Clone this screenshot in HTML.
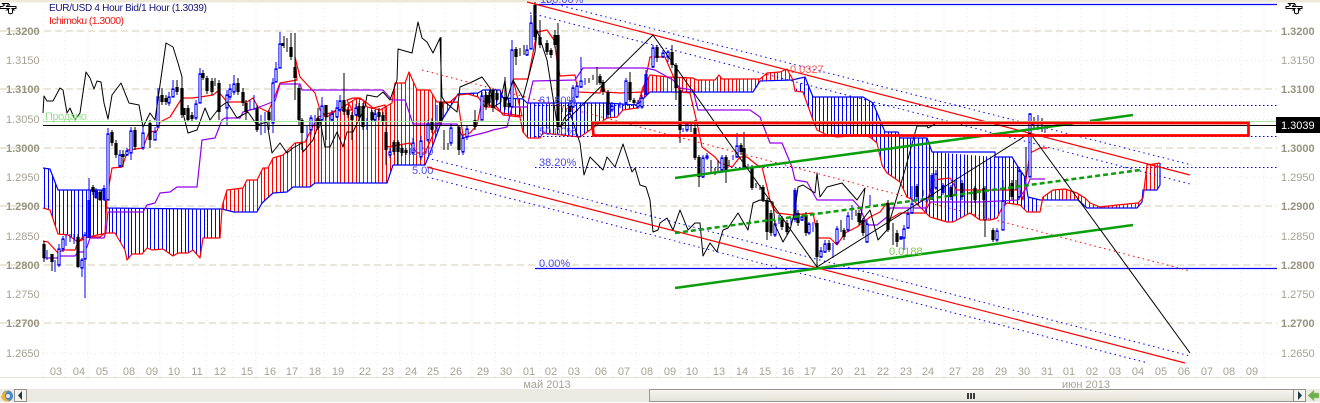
<!DOCTYPE html>
<html><head><meta charset="utf-8"><style>
html,body{margin:0;padding:0;background:#fff;width:1320px;height:403px;overflow:hidden}
svg{display:block}
text{font-family:"Liberation Sans",sans-serif;font-size:11px}
.a text{fill:#a5a394}
.b{font-weight:bold}
.a .b{fill:#96947f}
.d text{fill:#a5a394;text-anchor:middle}
.p{fill:none;stroke-linejoin:round}
</style></head><body>
<svg width="1320" height="403" viewBox="0 0 1320 403" xmlns="http://www.w3.org/2000/svg">
<defs>
<pattern id="hr" width="19" height="10" patternUnits="userSpaceOnUse" x="44"><path d="M0 0h1v10h-1zM4 0h1v10h-1zM8 0h1v10h-1zM11 0h1v10h-1zM15 0h1v10h-1z" fill="#f00" shape-rendering="crispEdges"/></pattern>
<pattern id="hb" width="19" height="10" patternUnits="userSpaceOnUse" x="44"><path d="M0 0h1v10h-1zM4 0h1v10h-1zM8 0h1v10h-1zM11 0h1v10h-1zM15 0h1v10h-1z" fill="#00f" shape-rendering="crispEdges"/></pattern>
<linearGradient id="th" x1="0" y1="0" x2="0" y2="1"><stop offset="0" stop-color="#f6f5ef"/><stop offset="1" stop-color="#e4e3da"/></linearGradient>
<g id="zm" fill="#fff" stroke="#000" stroke-width="1"><path d="M3.500 3.500h5l1 1.500h-2l-1 1.500h9.500v2h-4l2 1.500h-1.500v3l-2 1-2-1v-3h-1.500l2-1.500h-9v-2h2.500l2-1.500-2-1.500z"/></g>
</defs>
<rect width="1320" height="2.500" fill="#ece9d8"/>

<!-- grid -->
<g stroke="#ebe7d8" stroke-width="1" stroke-dasharray="1 3" fill="none">
<path d="M43 4V377M65 4V377M88 4V377M115 4V377M138 4V377M160 4V377M183 4V377M206 4V377M233 4V377M256 4V377M278 4V377M301 4V377M324 4V377M354 4V377M377 4V377M400 4V377M422 4V377M445 4V377M472 4V377M495 4V377M518 4V377M540 4V377M563 4V377M590 4V377M613 4V377M636 4V377M659 4V377M681 4V377M708 4V377M731 4V377M754 4V377M777 4V377M799 4V377M826 4V377M849 4V377M872 4V377M895 4V377M917 4V377M944 4V377M967 4V377M990 4V377M1013 4V377M1036 4V377M1058 4V377M1081 4V377M1104 4V377M1127 4V377M1150 4V377M1173 4V377M1196 4V377M1218 4V377M1241 4V377M1264 4V377"/>
<path d="M43 60.500H1277M43 119.500H1277M43 177.500H1277M43 236.500H1277M43 294.500H1277M43 353.500H1277"/>
</g>
<g stroke="#ebe7d8" stroke-width="2" stroke-dasharray="7 4" fill="none">
<path d="M0 31H1277M0 89H1277M0 148H1277M0 206H1277M0 265H1277M0 323H1277"/>
</g>
<path d="M0 377.500H1320" stroke="#e4e2d6"/>

<!-- cloud -->
<polygon fill="url(#hb)" points="43,168 50,169 58,190 103,190 107,208 200,209 222,209 220,238 203,238 200,258 193,250 188,253 178,253 173,256 163,249 152,250 147,248 142,254 132,254 127,260 125,250 115,233 107,233 88,237 78,242 68,235 58,234 50,210 43,208"/>
<polygon fill="url(#hr)" points="222,209 223,203 227,190 243,188 247,180 257,180 263,168 268,168 273,158 283,155 295,143 305,142 312,128 318,117 330,113 343,107 357,98 363,100 367,107 380,110 392,103 395,83 405,83 409,72 417,90 430,90 437,102 450,102 458,95 458,94 455,99 442,120 430,153 425,165 393,165 387,183 315,183 310,187 293,187 287,192 273,193 262,203 257,212 234,212"/>
<polygon fill="url(#hb)" points="458,94 478,93 483,90 500,90 503,98 523,99 527,103 607,103 637,105 645,97 637,108 623,110 617,117 607,118 580,137 543,133 540,138 528,138 523,132 520,117 503,115 497,107 485,107 478,97 468,94"/>
<polygon fill="url(#hr)" points="637,108 643,87 650,75 668,77 693,78 697,80 715,80 719,75 722,79 760,79 767,73 780,72 787,69 793,80 795,91 792,80 760,81 753,92 650,92 645,97"/>
<polygon fill="url(#hb)" points="795,91 805,77 813,97 863,97 873,103 880,120 885,132 898,132 900,138 927,138 932,152 995,157 1012,157 1020,170 1025,177 1028,197 1040,200 1040,212 1027,212 1020,205 1007,203 1002,208 997,218 990,220 980,220 970,213 953,222 947,222 930,217 913,200 907,197 900,182 887,173 882,165 877,143 870,137 860,135 837,137 827,135 817,130 813,120 803,92"/>
<polygon fill="url(#hr)" points="1043,197 1053,190 1065,189 1077,193 1085,198 1090,203 1100,207 1117,205 1138,203 1143,198 1147,165 1160,163 1160,183 1157,190 1143,190 1142,202 1137,208 1087,208 1078,200 1043,200"/>

<!-- span lines -->
<g class="p" stroke="#00f" stroke-width="1.200">
<polyline points="43,168 50,169 58,190 103,190 107,208 200,209 222,209 234,212 257,212 262,203 273,193 287,192 293,187 310,187 315,183 387,183 393,165 425,165 430,153 442,120 455,99 458,94 478,93 483,90 500,90 503,98 523,99 527,103 607,103 637,105 645,97 650,92 753,92 760,81 792,80 805,77 813,97 863,97 873,103 880,120 885,132 898,132 900,138 927,138 932,152 995,152 995,157 1012,157 1020,170 1025,177 1028,197 1040,200 1078,200 1087,208 1137,208 1142,202 1143,190 1157,190 1160,185 1160,163"/>
</g>
<g class="p" stroke="#f00" stroke-width="1.200">
<polyline points="43,208 50,210 58,234 68,235 78,242 88,237 107,233 115,233 125,250 127,260 132,254 142,254 147,248 152,250 163,249 173,256 178,253 188,253 193,250 200,258 203,238 220,238 222,209 223,203 227,190 243,188 247,180 257,180 263,168 268,168 273,158 283,155 295,143 305,142 312,128 318,117 330,113 343,107 357,98 363,100 367,107 380,110 392,103 395,83 405,83 409,72 417,90 430,90 437,102 450,102 458,95 468,94 478,97 485,107 497,107 503,115 520,117 523,132 528,138 540,138 543,133 580,137 607,118 617,117 623,110 637,108 643,87 650,75 668,77 693,78 697,80 715,80 719,75 722,79 760,79 767,73 780,72 787,69 793,80 795,91 803,92 813,120 817,130 827,135 837,137 860,135 870,137 877,143 882,165 887,173 900,182 907,197 913,200 930,217 947,222 953,222 970,213 980,220 990,220 997,218 1002,208 1007,203 1020,205 1027,212 1040,212 1043,197 1053,190 1065,189 1077,193 1085,198 1090,203 1100,207 1117,205 1138,203 1143,198 1147,165 1160,163"/>
<polyline points="43,241 48,242 58,253 63,250 75,250 78,242 83,237 100,237 105,233 107,197 112,168 122,167 128,150 143,148 149,132 157,131 160,122 170,117 182,98 192,98 200,97 213,95 218,91 227,102 247,102 253,98 258,107 268,112 273,101 280,83 297,80 295,57 300,77 315,93 320,110 327,117 330,115 337,110 352,110 347,100 353,98 360,98 367,103 373,108 385,105 387,147 410,143 417,153 425,153 432,137 440,120 443,103 458,102 463,135 470,133 477,125 482,100 493,107 502,113 522,116 513,79 528,79 537,32 547,30 554,40 557,60 560,76 575,75 578,92 600,93 603,83 605,92 620,93 643,92 650,57 665,57 680,92 690,93 697,123 702,147 715,157 720,163 732,167 740,157 747,157 757,165 762,167 767,187 770,200 773,208 777,213 793,215 813,213 818,238 830,238 837,245 845,233 857,227 870,217 880,212 887,203 888,220 900,213 925,213 927,203 933,180 950,178 957,190 1020,190 1023,200 1030,153 1040,148 1047,148"/>
</g>
<polyline class="p" stroke="#9400f0" stroke-width="1.200" points="43,258 57,258 59,256 75,256 78,252 83,252 87,247 90,238 104,238 106,232 108,212 143,212 147,205 155,203 160,193 170,192 177,187 197,187 202,140 215,138 222,120 225,118 240,118 243,112 257,108 275,101 280,84 300,84 302,90 383,90 392,100 405,100 413,124 457,124 463,138 487,132 493,130 507,127 512,107 527,107 533,81 575,80 583,68 645,68 655,70 673,80 680,88 693,90 698,110 750,110 760,117 763,125 770,143 782,143 792,167 795,180 807,182 817,200 853,200 860,208 867,225 877,225 887,217 890,208 927,208 930,202 980,202 1018,200 1027,187 1030,179 1045,179"/>

<!-- candles -->
<path class="p" stroke="#000" stroke-width="1" d="M44 241V262M52 254V271M78 234V268M93 185V195M100 190V201M112 130V146M116 140V158M123 150V167M135 127V150M150 120V148M162 88V105M166 95V105M177 80V95M182 80V118M188 105V122M192 112V122M203 70V80M207 76V94M212 78V95M215 78V86M219 80V120M238 78V95M243 88V106M246 100V120M257 105V132M269 110V130M284 36V48M287 38V52M291 33V60M295 33V100M299 85V125M302 118V150M318 108V130M326 105V140M344 73V115M348 107V118M352 112V140M359 103V120M363 103V130M372 110V122M379 108V120M383 112V125M386 128V165M394 140V155M398 140V165M402 145V156M406 148V155M432 118V133M441 37V125M444 130V150M448 143V150M459 125V155M475 110V130M486 92V110M489 92V106M493 88V112M497 90V102M505 77V110M509 100V108M516 47V65M520 48V56M524 45V55M535 2V40M540 20V48M547 40V55M551 48V58M555 30V48M558 23V130M562 108V112M566 108V112M570 100V115M589 78V83M593 75V80M597 67V85M600 74V85M603 80V95M608 90V118M630 72V102M634 98V105M657 45V62M672 45V68M676 63V100M680 88V143M691 122V132M695 120V160M699 155V187M711 160V173M715 168V175M718 160V172M726 155V183M729 160V166M741 143V155M744 132V170M752 165V190M756 183V188M760 185V190M763 185V202M767 198V240M771 210V236M782 216V230M787 220V235M798 210V226M806 212V236M817 220V267M829 240V252M841 220V232M844 228V240M856 210V216M859 210V225M863 218V236M888 200V232M893 223V245M897 230V247M917 184V200M923 190V196M951 185V200M955 180V195M962 180V200M975 186V203M985 186V237M993 228V242M1012 180V200M1016 180V190M1026 147V177M1034 117V130M1042 118V132"/>
<path class="p" stroke="#000" stroke-width="3.200" d="M44 244V258M52 254V262M78 237V267M93 187V192M100 192V200M112 132V143M116 143V155M123 154V157M135 130V147M150 123V140M162 95V102M166 98V102M177 87V92M182 88V115M184 108V115M188 108V120M192 115V119M203 73V78M207 78V91M212 81V92M219 83V112M238 83V92M243 92V103M246 103V112M257 108V130M269 112V120M283 43V46M291 47V57M295 67V78M299 88V120M302 120V133M318 118V128M326 105V117M344 100V112M348 110V115M352 115V120M359 106V117M363 106V127M372 112V120M379 112V117M383 115V122M386 132V150M394 142V152M398 142V152M402 148V153M406 150V153M432 122V130M441 102V122M459 127V150M475 120V127M486 95V107M489 95V103M493 90V108M497 93V100M505 97V107M509 103V107M516 49V57M535 5V37M540 37V45M547 43V52M551 50V55M555 35V45M558 35V127M570 106V112M600 76V83M603 82V92M608 92V115M630 82V100M634 100V103M657 47V58M672 52V65M676 65V88M680 90V130M695 128V158M699 157V177M726 157V170M741 145V152M744 148V168M752 167V188M763 187V200M767 200V232M771 213V233M782 218V227M787 223V232M798 213V223M806 215V233M817 223V257M829 243V250M844 230V237M859 213V222M863 220V233M888 203V230M897 233V242M917 186V197M951 187V197M962 183V197M975 188V200M984 188V200M993 230V240M1012 183V197"/>
<path class="p" stroke="#00f" stroke-width="1" d="M47 250V260M55 260V272M59 244V267M63 236V252M66 234V246M70 234V242M74 234V244M82 258V277M85 232V298M89 178V238M96 188V199M104 185V201M108 128V200M120 150V168M127 148V156M131 127V160M143 125V150M155 127V140M158 88V127M169 92V106M173 80V97M196 100V120M200 68V103M227 90V125M230 84V100M234 75V95M250 100V110M254 95V110M261 115V135M265 112V133M273 78V133M276 62V82M280 32V68M307 125V140M311 115V135M315 115V125M322 97V120M332 110V122M337 100V118M340 95V112M356 104V116M367 118V130M375 110V122M390 148V158M410 148V155M413 138V155M421 136V160M428 120V142M437 105V132M451 124V146M463 135V155M467 125V140M482 92V120M501 92V102M512 40V107M527 45V56M531 15V49M573 85V108M577 82V98M581 57V88M585 78V85M612 102V112M620 102V108M626 78V105M638 100V109M642 95V109M646 70V96M653 45V68M663 50V58M668 50V62M683 128V132M687 122V132M703 155V178M707 153V160M722 155V172M733 155V160M737 133V158M748 164V168M775 220V237M779 215V224M791 218V225M795 188V222M802 215V221M809 222V235M813 222V232M821 247V258M825 240V253M833 243V258M837 226V245M848 212V232M852 205V220M867 220V243M870 195V206M901 236V240M904 225V250M908 210V229M912 186V214M932 173V200M936 170V190M943 183V195M997 228V242M1003 180V230M1019 168V200M1030 113V177M1038 115V130M1045 126V133"/>
<path class="p" stroke="#00f" stroke-width="3.200" d="M89 200V238M96 190V198M104 188V200M795 190V220M932 175V200M943 185V193M646 74V95"/>
<defs><path id="bh" d="M59 250V264M63 240V248M82 261V267M85 236V258M108 135V199M120 156V165M127 152V154M131 132V152M143 134V147M155 133V139M158 98V126M169 98V102M173 90V96M196 105V117M200 75V102M227 96V107M230 90V96M234 85V91M273 84V122M276 70V81M280 45V67M311 119V129M322 107V119M332 115V119M337 109V116M340 102V109M356 109V114M375 115V119M390 153V154M413 144V152M421 142V156M428 125V139M451 129V142M463 139V151M467 130V136M482 97V119M512 51V106M527 51V54M531 24V48M573 89V106M577 87V96M581 82V86M612 107V109M626 82V102M638 104V106M642 99V106M653 49V66M663 54V56M668 53V56M687 126V129M703 159V176M707 157V157M722 159V169M737 147V156M775 225V234M802 218V219M809 225V232M821 252V256M825 245V251M837 230V242M848 217V229M867 225V241M901 238V238M904 230V237M908 215V227M912 205V212M936 175V187M997 232V239M1003 202V229M1019 172V196M1030 115V176"/></defs>
<use href="#bh" fill="none" stroke="#00f" stroke-width="3.200" stroke-linecap="square"/>
<use href="#bh" fill="none" stroke="#fff" stroke-width="1.200"/>

<!-- chikou -->
<polyline class="p" stroke="#000" stroke-width="1" points="43,113 44,96 47,101 53,101 60,88 63,90 67,113 70,108 75,120 80,113 86,72 90,78 94,89 97,81 101,82 104,103 108,119 112,95 121,83 129,103 139,105 143,127 150,113 155,120 166,43 173,47 178,63 182,77 182,97 183,113 188,133 197,130 205,108 210,120 220,107 227,102 237,118 248,112 257,125 267,122 272,153 280,143 287,153 293,148 302,143 303,152 313,140 320,120 325,147 330,147 337,132 343,147 347,132 353,132 365,107 367,95 377,97 383,92 390,100 397,80 398,49 412,53 418,22 422,38 427,42 433,53 440,38 442,97 445,102 457,112 460,87 472,82 482,77 490,88 493,107 500,103 505,80 507,100 513,80 523,98 535,52 537,30 547,60 557,123 560,127 565,117 570,113 580,143 584,175 590,157 603,170 607,157 615,167 623,144 632,172 635,168 640,185 646,187 650,200 653,232 658,230 660,223 667,218 673,230 680,210 688,230 695,223 700,223 703,256 710,243 717,252 720,240 723,230 728,228 738,213 748,230 753,203 760,200 773,202 775,225 783,242 790,230 795,210 798,187 803,185 815,193 817,173 820,197 827,187 842,183 857,200 865,188 860,223 870,210 878,240 887,230 905,170 915,133 917,126 927,126 928,128 937,123 945,122"/>

<!-- fibo -->
<g stroke="#00f" fill="none">
<path d="M535 4.500H1277M535 268.500H1277" stroke-width="1.300"/>
<path d="M535 105.500H1277M535 136.500H1277M535 167.500H1277" stroke-dasharray="1.500 2.500"/>
</g>
<g fill="#4a4af5">
<text x="539" y="104">61.80%</text>
<text x="539" y="135">50.00%</text>
<text x="539" y="166">38.20%</text>
<text x="539" y="267">0.00%</text>
<text x="540" y="3">100.00%</text>
<text x="412" y="155">5.00</text>
<text x="412" y="174">5.00</text>
</g>

<!-- channels -->
<g fill="none">
<path d="M527 2L1190 175M427 167L1185 363" stroke="#f00" stroke-width="1.200"/>
<path d="M547 2L1192 165M530 13L1190 184M427 158L1190 356M427 177L1148 363" stroke="#00f" stroke-width="1" stroke-dasharray="1.500 3.500"/>
<path d="M422 70L1190 271" stroke="#f00" stroke-width="1" stroke-dasharray="1.500 3.500"/>
<path d="M675 178L1073 123.500M1090 121L1133 115M675 288L1133 225" stroke="#0a9e0a" stroke-width="2.500"/>
<path d="M675 233L1140 170" stroke="#0a9e0a" stroke-width="2.500" stroke-dasharray="5 3"/>
<path d="M560 127L653 35L817 267L1030 133L1190 353" stroke="#000" stroke-width="1"/>
</g>

<!-- price lines -->
<path d="M43 121.500H1277" stroke="#a8e8a0" stroke-width="1"/>
<path d="M43 125.500H1277" stroke="#000" stroke-width="1"/>
<text x="45" y="120" fill="#96e090" textLength="42" style="font-size:11px">Продано</text>
<text x="790" y="73" fill="#f05a5a">0.0327</text>
<text x="889" y="255" fill="#7cc850">0.0188</text>

<!-- red rect -->
<path d="M592.500 123H1248.500V135.500H593.500Z" fill="none" stroke="#f00" stroke-width="2.700"/>

<!-- title -->
<text x="49" y="11" fill="#14147a" textLength="158" style="font-size:10px">EUR/USD 4 Hour Bid/1 Hour (1.3039)</text>
<text x="49" y="24" fill="#f01818" textLength="75" style="font-size:10.500px">Ichimoku (1.3000)</text>

<g class="a">
<text class="b" x="6" y="35">1.3200</text><text x="6" y="64">1.3150</text><text class="b" x="6" y="93">1.3100</text><text x="6" y="123">1.3050</text><text class="b" x="6" y="152">1.3000</text><text x="6" y="181">1.2950</text><text class="b" x="6" y="210">1.2900</text><text x="6" y="240">1.2850</text><text class="b" x="6" y="269">1.2800</text><text x="6" y="298">1.2750</text><text class="b" x="6" y="327">1.2700</text><text x="6" y="357">1.2650</text>
<text class="b" x="1281" y="35">1.3200</text><text x="1281" y="64">1.3150</text><text class="b" x="1281" y="93">1.3100</text><text class="b" x="1281" y="152">1.3000</text><text x="1281" y="181">1.2950</text><text class="b" x="1281" y="210">1.2900</text><text x="1281" y="240">1.2850</text><text class="b" x="1281" y="269">1.2800</text><text x="1281" y="298">1.2750</text><text class="b" x="1281" y="327">1.2700</text><text x="1281" y="357">1.2650</text>
</g>
<rect x="1276" y="117" width="44" height="16" fill="#000"/>
<text x="1281" y="129" fill="#fff">1.3039</text>

<!-- dates -->
<g class="d">
<text x="56" y="375">03</text><text x="79" y="375">04</text><text x="102" y="375">05</text><text x="129" y="375">08</text><text x="152" y="375">09</text><text x="174" y="375">10</text><text x="197" y="375">11</text><text x="220" y="375">12</text><text x="247" y="375">15</text><text x="270" y="375">16</text><text x="292" y="375">17</text><text x="315" y="375">18</text><text x="338" y="375">19</text><text x="365" y="375">22</text><text x="388" y="375">23</text><text x="411" y="375">24</text><text x="433" y="375">25</text><text x="456" y="375">26</text><text x="483" y="375">29</text><text x="506" y="375">30</text><text x="529" y="375">01</text><text x="551" y="375">02</text><text x="574" y="375">03</text><text x="601" y="375">06</text><text x="624" y="375">07</text><text x="647" y="375">08</text><text x="670" y="375">09</text><text x="692" y="375">10</text><text x="719" y="375">13</text><text x="742" y="375">14</text><text x="765" y="375">15</text><text x="788" y="375">16</text><text x="810" y="375">17</text><text x="837" y="375">20</text><text x="860" y="375">21</text><text x="883" y="375">22</text><text x="906" y="375">23</text><text x="928" y="375">24</text><text x="955" y="375">27</text><text x="978" y="375">28</text><text x="1001" y="375">29</text><text x="1024" y="375">30</text><text x="1047" y="375">31</text><text x="1069" y="375">01</text><text x="1092" y="375">02</text><text x="1115" y="375">03</text><text x="1138" y="375">04</text><text x="1161" y="375">05</text><text x="1184" y="375">06</text><text x="1207" y="375">07</text><text x="1229" y="375">08</text><text x="1252" y="375">09</text>
<text x="547" y="388">май 2013</text><text x="1086" y="388">июн 2013</text>
</g>

<!-- scrollbar -->
<rect x="0" y="389" width="1320" height="13" fill="#ecebe3"/>
<rect y="402" width="1320" height="1" fill="#fff"/>
<circle cx="7.500" cy="396" r="5.500" fill="#4a86c8"/>
<path d="M1 397c2-5 5-6 8-7-3 2-4 4-4 6s2 4 5 5c-4 1-7 0-9-4z" fill="#f0b030"/>
<circle cx="8" cy="396" r="2" fill="#dfe8f4"/>
<rect x="14.500" y="389.500" width="12" height="12" fill="#f4f3ec" stroke="#909088"/>
<path d="M18 395.500l4-4.500v9z" fill="#1c3c4c"/>
<rect x="649.500" y="389.500" width="644" height="12" fill="url(#th)" stroke="#98978f"/>
<path d="M968 393v6M971 393v6M974 393v6" stroke="#000" stroke-width="1.500"/>
<rect x="1293.500" y="389.500" width="12" height="12" fill="#f4f3ec" stroke="#909088"/>
<path d="M1302 395.500l-4-4.500v9z" fill="#1c3c4c"/>
<path d="M1308 395.500l6-5.500v3h5v5h-5v3z" fill="#6cb04c" stroke="#a8c890" stroke-width=".5"/>

<!-- zoom icons -->
<use href="#zm" x="0" y="0"/>
<use href="#zm" x="1286" y="0"/>
</svg>
</body></html>
